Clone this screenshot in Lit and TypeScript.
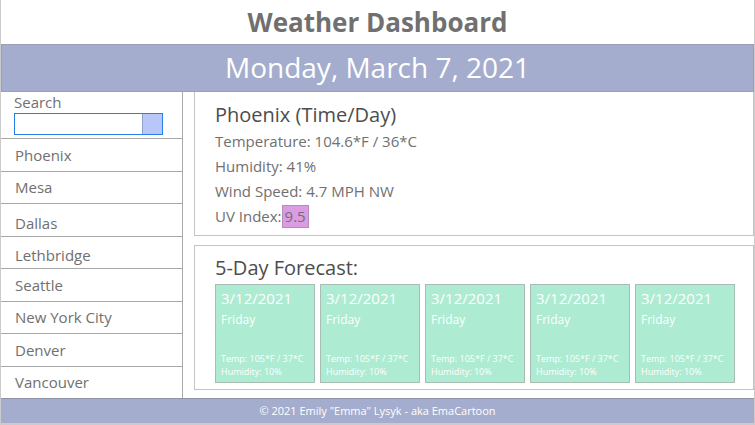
import { LitElement, html, css } from "lit";
import { customElement, property, state } from "lit/decorators.js";
import { classMap } from "lit/directives/class-map.js";

interface City {
  name: string;
  low?: boolean;
}

const CITIES: City[] = [
  { name: "Phoenix" },
  { name: "Mesa" },
  { name: "Dallas", low: true },
  { name: "Lethbridge", low: true },
  { name: "Seattle" },
  { name: "New York City" },
  { name: "Denver" },
  { name: "Vancouver" },
];

const DAY = { date: "3/12/2021", day: "Friday", temp: "105*F / 37*C", humidity: "10%" };
const FORECAST = [DAY, DAY, DAY, DAY, DAY];

@customElement("forecast-card")
export class ForecastCard extends LitElement {
  @property({ attribute: false }) data = DAY;

  static styles = css`
    :host {
      display: flex;
      flex-direction: column;
      justify-content: space-between;
      box-sizing: border-box;
      height: 99px;
      padding: 3px 0 4px 5px;
      border: 1px solid #a9bdb5;
      background: #adebd2;
      color: #fff;
      white-space: nowrap;
    }
    h3,
    p {
      margin: 0;
      font-weight: 400;
    }
    h3 {
      font-size: 15px;
      line-height: 21px;
    }
    .day {
      font-size: 12px;
      line-height: 22px;
    }
    .detail {
      font-size: 9px;
      line-height: 13px;
      font-weight: 500;
    }
  `;

  render() {
    return html`
      <div>
        <h3>${this.data.date}</h3>
        <p class="day">${this.data.day}</p>
      </div>
      <div>
        <p class="detail">Temp: ${this.data.temp}</p>
        <p class="detail">Humidity: ${this.data.humidity}</p>
      </div>
    `;
  }
}

@customElement("app-root")
export class AppRoot extends LitElement {
  @state() private query = "";

  static styles = css`
    :host {
      display: flex;
      flex-direction: column;
      box-sizing: border-box;
      min-height: 100vh;
      border: solid #cbcbcb;
      border-width: 0 1px 2px;
      background: #fff;
      color: #707070;
      font-family: "Open Sans", "Noto Sans", sans-serif;
      font-size: 15px;
      line-height: 24px;
    }
    h1,
    h2,
    p,
    ul {
      margin: 0;
      padding: 0;
    }
    h1 {
      font-size: 26px;
      line-height: 44px;
      font-weight: 700;
      text-align: center;
    }
    .banner {
      padding-bottom: 2px;
      border: 1px solid #9a9fb4;
      background: #a4adcd;
      color: #fff;
      font-size: 28px;
      line-height: 44px;
      text-align: center;
    }
    .body {
      display: grid;
      grid-template-columns: 182px minmax(0, 1fr);
      column-gap: 11px;
      flex: 1;
    }
    aside {
      display: flex;
      flex-direction: column;
      border-right: 1px solid #a8a8a8;
    }
    .search {
      height: 46px;
      box-sizing: border-box;
      padding: 0 19px 3px 13px;
    }
    label {
      display: block;
      line-height: 21px;
    }
    .field {
      display: flex;
      height: 22px;
      box-sizing: border-box;
      border: 1px solid #2680eb;
    }
    .field input {
      flex: 1;
      min-width: 0;
      padding: 0 4px;
      border: 0;
      outline: 0;
      background: #fff;
      color: inherit;
      font: inherit;
    }
    .field button {
      width: 20px;
      padding: 0;
      border: 0;
      border-left: 1px solid #8fa5cf;
      background: #b8c6f8;
    }
    ul {
      display: grid;
      flex: 1;
      grid-auto-rows: 1fr;
      list-style: none;
    }
    li {
      display: flex;
      border-top: 1px solid #a8a8a8;
    }
    .city {
      display: flex;
      flex: 1;
      align-items: center;
      padding: 0 14px;
      border: 0;
      background: none;
      color: inherit;
      font: inherit;
      line-height: 26px;
    }
    .low {
      align-items: flex-end;
    }
    main {
      display: flex;
      flex-direction: column;
      gap: 9px;
      padding-bottom: 8px;
    }
    section {
      flex: 1;
      padding: 9px 18px 5px 20px;
      border: solid #c4c4c4;
      border-width: 0 1px 1px;
    }
    .forecast {
      padding: 8px 18px 6px 20px;
      border-top-width: 1px;
    }
    h2 {
      color: #4d4d4d;
      font-size: 20px;
      line-height: 28px;
      font-weight: 400;
    }
    .reading {
      line-height: 25px;
    }
    .uv {
      display: inline-block;
      padding: 0 2px;
      border: 1px solid #b58dba;
      background: #dc9ce3;
      line-height: 21px;
    }
    .days {
      display: grid;
      grid-template-columns: repeat(5, minmax(0, 1fr));
      gap: 5px;
      padding-top: 2px;
    }
    footer {
      border-top: 1px solid #8f94a8;
      background: #a4adcd;
      color: #fff;
      font-size: 11px;
      line-height: 24px;
      text-align: center;
    }
  `;

  private onInput(e: Event) {
    this.query = (e.target as HTMLInputElement).value;
  }

  render() {
    return html`
      <h1>Weather Dashboard</h1>
      <div class="banner">Monday, March 7, 2021</div>
      <div class="body">
        <aside>
          <div class="search">
            <label for="city-search">Search</label>
            <div class="field">
              <input id="city-search" type="text" .value=${this.query} @input=${this.onInput} />
              <button type="button" aria-label="Search"></button>
            </div>
          </div>
          <ul>
            ${CITIES.map(
              (c) => html`<li>
                <button type="button" class=${classMap({ city: true, low: !!c.low })}>${c.name}</button>
              </li>`
            )}
          </ul>
        </aside>
        <main>
          <section>
            <h2>Phoenix (Time/Day)</h2>
            <p class="reading">Temperature: 104.6*F / 36*C</p>
            <p class="reading">Humidity: 41%</p>
            <p class="reading">Wind Speed: 4.7 MPH NW</p>
            <p class="reading">UV Index:<span class="uv">9.5</span></p>
          </section>
          <section class="forecast">
            <h2>5-Day Forecast:</h2>
            <div class="days">
              ${FORECAST.map((d) => html`<forecast-card .data=${d}></forecast-card>`)}
            </div>
          </section>
        </main>
      </div>
      <footer>© 2021 Emily "Emma" Lysyk - aka EmaCartoon</footer>
    `;
  }
}
